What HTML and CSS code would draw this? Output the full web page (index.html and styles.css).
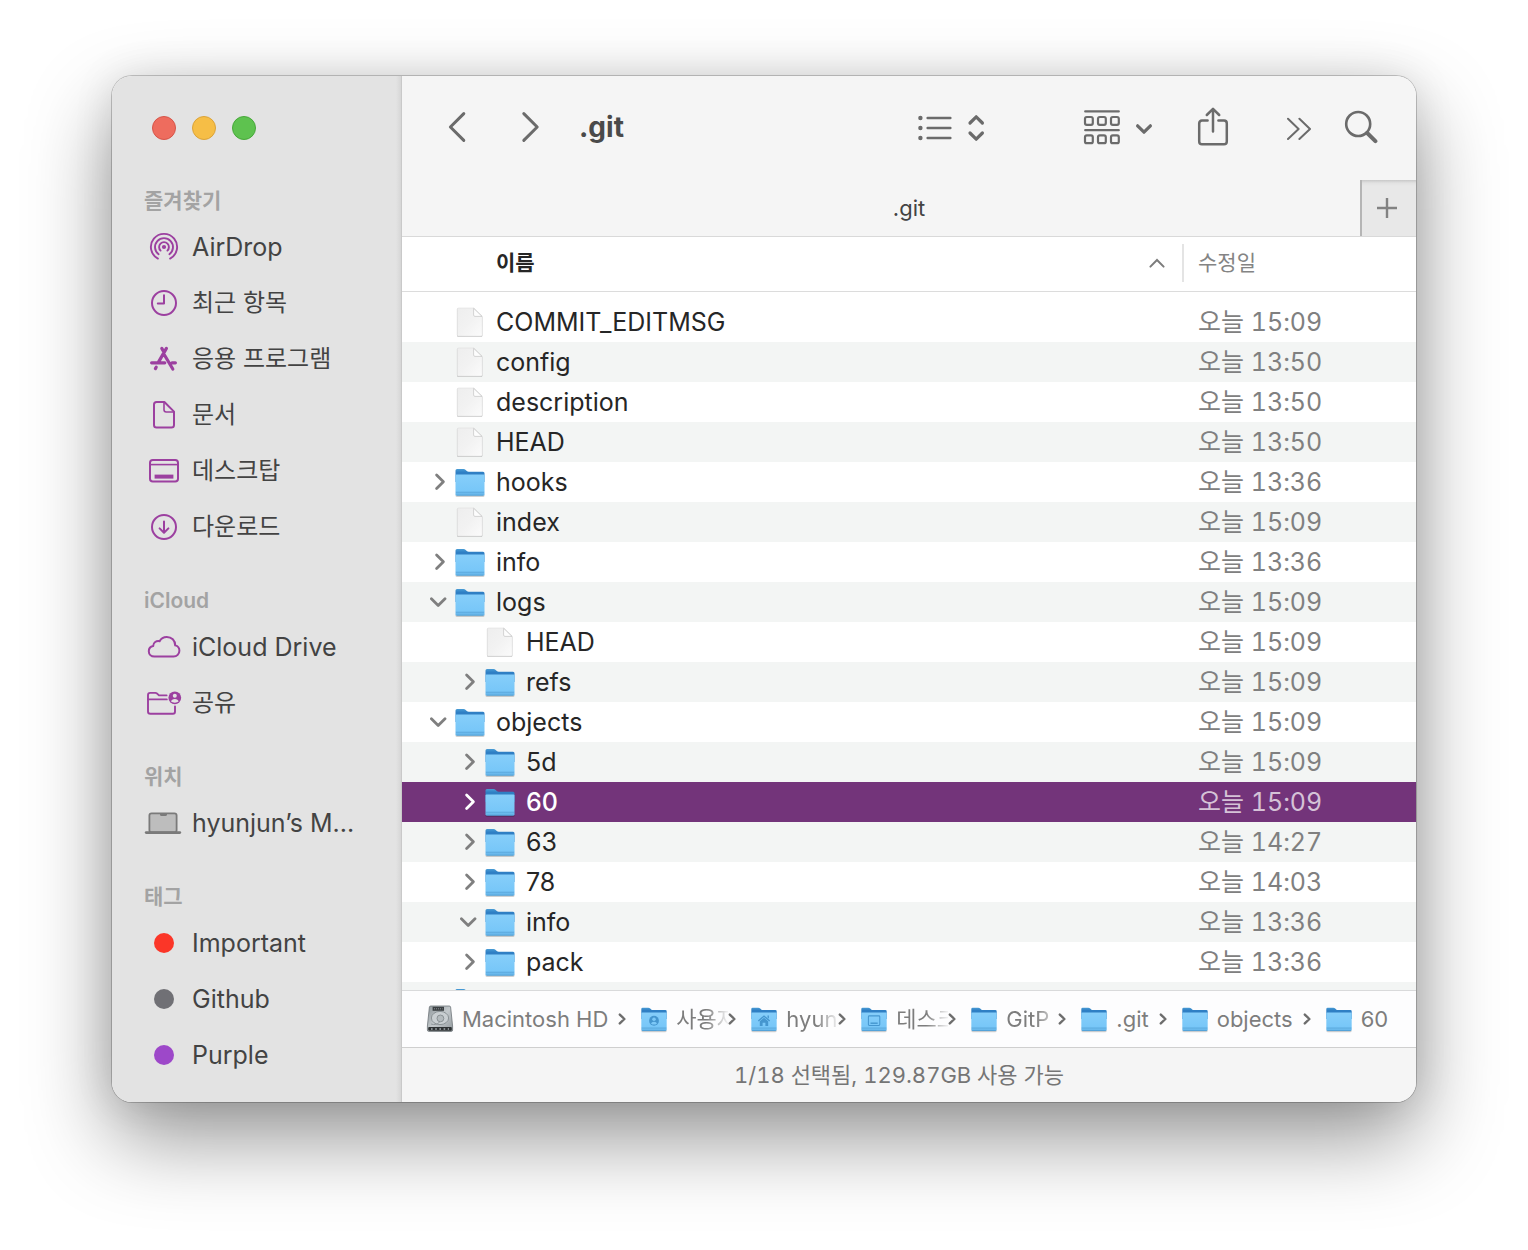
FILE: index.html
```html
<!DOCTYPE html>
<html lang="ko">
<head>
    <meta charset="UTF-8">
    <meta name="viewport" content="width=device-width, initial-scale=1.0">
    <title>.git</title>
    <link rel="stylesheet" href="styles.css">
</head>
<body>
    <!-- Shared icons -->
    <svg class="sprite" aria-hidden="true">
        <defs>
            <linearGradient id="folderBack" x1="0" y1="0" x2="0" y2="1">
                <stop offset="0" stop-color="#4a9dd6"/>
                <stop offset="0.25" stop-color="#2f7fc4"/>
                <stop offset="1" stop-color="#2f7fc4"/>
            </linearGradient>
            <linearGradient id="folderFront" x1="0" y1="0" x2="0" y2="1">
                <stop offset="0" stop-color="#86cefa"/>
                <stop offset="0.76" stop-color="#78c7f8"/>
                <stop offset="0.82" stop-color="#6cbaed"/>
                <stop offset="1" stop-color="#68b8ec"/>
            </linearGradient>
            <linearGradient id="paper" x1="0" y1="0" x2="1" y2="1">
                <stop offset="0" stop-color="#eeeeee"/>
                <stop offset="0.5" stop-color="#f2f2f2"/>
                <stop offset="1" stop-color="#fbfbfb"/>
            </linearGradient>
            <linearGradient id="metal" x1="0" y1="0" x2="1" y2="1">
                <stop offset="0" stop-color="#8f979b"/>
                <stop offset="0.5" stop-color="#c3c9cc"/>
                <stop offset="1" stop-color="#92999d"/>
            </linearGradient>
        </defs>
        <symbol id="folder" viewBox="0 0 32 32">
            <rect x="1.5" y="28" width="29" height="3" rx="1.5" fill="#000" opacity="0.18"/>
            <path d="M1.5 4.5Q1.5 3 3 3H9.5Q10.8 3 11.7 3.9L12.8 5Q13.5 5.7 14.8 5.7H29Q30.5 5.7 30.5 7.2V16H1.5Z" fill="url(#folderBack)"/>
            <path d="M1.5 9.6Q1.5 8.6 2.5 8.6H29.5Q30.5 8.6 30.5 9.6V28.3Q30.5 29.6 29.2 29.6H2.8Q1.5 29.6 1.5 28.3Z" fill="url(#folderFront)"/>
            <path d="M2 26.5H30" stroke="#55a3d8" stroke-width="0.5"/>
            <path d="M2.5 29.2H29.5" stroke="#4a99cf" stroke-width="0.8"/>
        </symbol>
        <symbol id="file" viewBox="0 0 32 32">
            <path d="M4.5 2.6H20L28.4 11V29.5Q28.4 31 27 31H4.5Q3 31 3 29.5V4Q3 2.6 4.5 2.6Z" fill="#000" opacity="0.22"/>
            <path d="M4.5 2H20L28.3 10.2V28.8Q28.3 30.2 27 30.2H4.5Q3.2 30.2 3.2 28.8V3.4Q3.2 2 4.5 2Z" fill="url(#paper)" stroke="#d9d9d9" stroke-width="0.5"/>
            <path d="M19.6 2.3V9Q19.6 10.4 21 10.4H28Z" fill="#fdfdfd" stroke="#c4c4c4" stroke-width="0.7"/>
        </symbol>
        <symbol id="right" viewBox="0 0 20 20">
            <path d="M6.6 3L13.4 9.8L6.6 16.6" fill="none" stroke="currentColor" stroke-width="2.8" stroke-linecap="round" stroke-linejoin="round"/>
        </symbol>
        <symbol id="down" viewBox="0 0 20 20">
            <path d="M1.4 6.8L8.2 13.6L15 6.8" fill="none" stroke="currentColor" stroke-width="2.8" stroke-linecap="round" stroke-linejoin="round"/>
        </symbol>
        <symbol id="small-right" viewBox="0 0 8 12">
            <path d="M1.8 1.6L6.4 6L1.8 10.4" fill="none" stroke="currentColor" stroke-width="2.4" stroke-linecap="round" stroke-linejoin="round"/>
        </symbol>
    </svg>

    <div class="window">
        <aside class="sidebar">
            <div class="lights">
                <button class="light close" aria-label="닫기"></button>
                <button class="light minimize" aria-label="최소화"></button>
                <button class="light zoom" aria-label="확대"></button>
            </div>

            <h2>즐겨찾기</h2>
            <ul>
                <li><a href="#">
                    <svg viewBox="0 0 40 32" fill="none" stroke="currentColor" stroke-width="1.9" stroke-linecap="round">
                        <circle cx="20" cy="16" r="2.1" fill="currentColor" stroke="none"/>
                        <path d="M16.6 19.6A4.9 4.9 0 1 1 23.4 19.6"/>
                        <path d="M14.6 23.3A9 9 0 1 1 25.4 23.3"/>
                        <path d="M13.9 27.6A13.1 13.1 0 1 1 26.1 27.6"/>
                    </svg>
                    AirDrop</a></li>
                <li><a href="#" class="ko">
                    <svg viewBox="0 0 40 32" fill="none" stroke="currentColor" stroke-width="2" stroke-linecap="round" stroke-linejoin="round">
                        <circle cx="20" cy="16" r="12"/>
                        <path d="M20 8.3V16.6H13.8"/>
                    </svg>
                    최근 항목</a></li>
                <li><a href="#" class="ko">
                    <svg viewBox="0 0 40 32" fill="none" stroke="currentColor" stroke-width="3.2" stroke-linecap="round">
                        <path d="M17.8 5.4L20 9.2M22.4 5.4L14.2 19.6M7.6 19.8H20.8M28 19.8H31.4M12.2 24.2L11.4 25.6M20.6 12.2L28.8 26"/>
                    </svg>
                    응용 프로그램</a></li>
                <li><a href="#" class="ko">
                    <svg viewBox="0 0 40 32" fill="none" stroke="currentColor" stroke-width="2" stroke-linejoin="round">
                        <path d="M12.6 3H20.4L30 12.6V26Q30 28.6 27.4 28.6H12.6Q10 28.6 10 26V5.6Q10 3 12.6 3Z"/>
                        <path d="M20 3.5V10.8Q20 13 22.2 13H29.5" stroke-width="1.6"/>
                    </svg>
                    문서</a></li>
                <li><a href="#" class="ko">
                    <svg viewBox="0 0 40 32" fill="none" stroke="currentColor" stroke-width="2">
                        <rect x="6" y="5" width="28" height="21.6" rx="2.8"/>
                        <path d="M6 9.6H34" stroke-width="1.6"/>
                        <path d="M10.6 21.6H29.4" stroke-width="4"/>
                    </svg>
                    데스크탑</a></li>
                <li><a href="#" class="ko">
                    <svg viewBox="0 0 40 32" fill="none" stroke="currentColor" stroke-width="2" stroke-linecap="round" stroke-linejoin="round">
                        <circle cx="20" cy="16" r="12"/>
                        <path d="M20 10.4V21.6M15.6 17.4L20 21.8L24.4 17.4"/>
                    </svg>
                    다운로드</a></li>
            </ul>

            <h2>iCloud</h2>
            <ul>
                <li><a href="#">
                    <svg viewBox="0 0 40 32" fill="none" stroke="currentColor" stroke-width="2" stroke-linejoin="round">
                        <path d="M10.5 25.6C7 25.6 4.8 23.2 4.8 20.2C4.8 17.6 6.6 15.5 9.2 15C9.2 11.6 12.4 9.4 15.6 10.2C17 7.4 19.8 5.9 22.8 5.9C27.6 5.9 31.2 9.5 31.2 14.4C33.8 15 35.4 17.2 35.4 19.8C35.4 23 32.8 25.6 29.6 25.6Z"/>
                    </svg>
                    iCloud Drive</a></li>
                <li><a href="#" class="ko">
                    <svg viewBox="0 0 40 32" fill="none" stroke="currentColor" stroke-width="1.9" stroke-linecap="round" stroke-linejoin="round">
                        <path d="M22.6 8.4H15L12.9 6.4Q12.3 5.9 11.4 5.9H6.2Q4 5.9 4 8.1V24.4Q4 26.7 6.3 26.7H29Q31 26.7 31 24.4V19.4"/>
                        <path d="M4 12.4H22.8"/>
                        <circle cx="30.8" cy="10.8" r="6.4" fill="currentColor" stroke="none"/>
                        <circle cx="30.8" cy="8.8" r="2" fill="#e3e3e3" stroke="none"/>
                        <path d="M27 14.6Q27.6 11.9 30.8 11.9T34.6 14.6Q33.2 15.7 30.8 15.7T27 14.6Z" fill="#e3e3e3" stroke="none"/>
                    </svg>
                    공유</a></li>
            </ul>

            <h2>위치</h2>
            <ul>
                <li><a href="#">
                    <svg class="mac" viewBox="0 0 40 32" fill="none" stroke="currentColor" stroke-width="1.8">
                        <rect x="5.4" y="6.4" width="27.2" height="19" rx="2.2" fill="#bdbdbd"/>
                        <path d="M16 7H23V7.4Q23 9 21.4 9H17.6Q16 9 16 7.4Z" fill="currentColor" stroke="none"/>
                        <path d="M2.2 25.6H35.8" stroke-width="2.8" stroke-linecap="round"/>
                    </svg>
                    hyunjun’s M...</a></li>
            </ul>

            <h2>태그</h2>
            <ul>
                <li><a href="#"><span class="tag red"></span>Important</a></li>
                <li><a href="#"><span class="tag gray"></span>Github</a></li>
                <li><a href="#"><span class="tag purple"></span>Purple</a></li>
            </ul>
        </aside>

        <main>
            <header class="toolbar">
                <button class="nav" aria-label="뒤로">
                    <svg width="20" height="32" viewBox="0 0 20 32"><path d="M15.8 2.6L2.4 16L15.8 29.4" /></svg>
                </button>
                <button class="nav" aria-label="앞으로">
                    <svg width="20" height="32" viewBox="0 0 20 32"><path d="M2.8 2.6L16.2 16L2.8 29.4" /></svg>
                </button>
                <h1>.git</h1>

                <button class="tool view" aria-label="보기">
                    <svg width="68" height="32" viewBox="0 0 68 32">
                        <g fill="currentColor" stroke="none">
                            <circle cx="2.4" cy="7" r="2.2"/>
                            <circle cx="2.4" cy="17" r="2.2"/>
                            <circle cx="2.4" cy="27" r="2.2"/>
                        </g>
                        <path d="M9.6 7H32.4M9.6 17H32.4M9.6 27H32.4" stroke-width="2.4"/>
                        <path d="M52 12L58.2 5.8L64.4 12M52 22L58.2 28.2L64.4 22" stroke-width="3.2"/>
                    </svg>
                </button>
                <button class="tool group" aria-label="그룹">
                    <svg width="70" height="36" viewBox="0 0 70 36" stroke-width="2.2">
                        <path d="M2.2 2.4H35.8M2.2 21.2H35.8"/>
                        <rect x="2" y="8" width="7.8" height="7.8" rx="1.8"/>
                        <rect x="15" y="8" width="7.8" height="7.8" rx="1.8"/>
                        <rect x="28" y="8" width="7.8" height="7.8" rx="1.8"/>
                        <rect x="2" y="26.4" width="7.8" height="7.8" rx="1.8"/>
                        <rect x="15" y="26.4" width="7.8" height="7.8" rx="1.8"/>
                        <rect x="28" y="26.4" width="7.8" height="7.8" rx="1.8"/>
                        <path d="M54.6 16.8L61 23.2L67.4 16.8" stroke-width="3.2"/>
                    </svg>
                </button>
                <button class="tool share" aria-label="공유">
                    <svg width="32" height="40" viewBox="0 0 32 40" stroke-width="2.5">
                        <path d="M10.6 13.6H5Q2.2 13.6 2.2 16.4V34.4Q2.2 37.2 5 37.2H27Q29.8 37.2 29.8 34.4V16.4Q29.8 13.6 27 13.6H21.4"/>
                        <path d="M16 24.6V2.4M9.8 8L16 1.8L22.2 8"/>
                    </svg>
                </button>
                <button class="tool" aria-label="더 보기">
                    <svg width="26" height="26" viewBox="0 0 26 26" stroke-width="2">
                        <path d="M2 4.8L12.6 15L2 25M13.4 4.8L24 15L13.4 25"/>
                    </svg>
                </button>
                <button class="tool" aria-label="검색">
                    <svg width="34" height="34" viewBox="0 0 34 34" stroke-width="2.6">
                        <circle cx="14.2" cy="14" r="12"/>
                        <path d="M23.2 23L31.4 31.2" stroke-width="4"/>
                    </svg>
                </button>
            </header>

            <div class="tabs">
                <a href="#" class="tab">.git</a>
                <button class="add" aria-label="새로운 탭">
                    <svg width="22" height="22" viewBox="0 0 22 22"><path d="M11 1V21M1 11H21"/></svg>
                </button>
            </div>

            <div class="list">
                <table>
                    <thead>
                        <tr>
                            <th class="name">
                                <button>이름
                                    <svg width="18" height="12" viewBox="0 0 18 12"><path d="M2.4 9.6L9 3L15.6 9.6"/></svg>
                                </button>
                            </th>
                            <th class="date"><button>수정일</button></th>
                        </tr>
                    </thead>
                    <tbody>
                        <tr>
                            <td><div class="entry"><span class="toggle"></span><svg class="icon"><use href="#file"/></svg>COMMIT_EDITMSG</div></td>
                            <td class="date">오늘 15:09</td>
                        </tr>
                        <tr>
                            <td><div class="entry"><span class="toggle"></span><svg class="icon"><use href="#file"/></svg>config</div></td>
                            <td class="date">오늘 13:50</td>
                        </tr>
                        <tr>
                            <td><div class="entry"><span class="toggle"></span><svg class="icon"><use href="#file"/></svg>description</div></td>
                            <td class="date">오늘 13:50</td>
                        </tr>
                        <tr>
                            <td><div class="entry"><span class="toggle"></span><svg class="icon"><use href="#file"/></svg>HEAD</div></td>
                            <td class="date">오늘 13:50</td>
                        </tr>
                        <tr>
                            <td><div class="entry"><button class="toggle" aria-label="펼치기"><svg><use href="#right"/></svg></button><svg class="icon"><use href="#folder"/></svg>hooks</div></td>
                            <td class="date">오늘 13:36</td>
                        </tr>
                        <tr>
                            <td><div class="entry"><span class="toggle"></span><svg class="icon"><use href="#file"/></svg>index</div></td>
                            <td class="date">오늘 15:09</td>
                        </tr>
                        <tr>
                            <td><div class="entry"><button class="toggle" aria-label="펼치기"><svg><use href="#right"/></svg></button><svg class="icon"><use href="#folder"/></svg>info</div></td>
                            <td class="date">오늘 13:36</td>
                        </tr>
                        <tr>
                            <td><div class="entry"><button class="toggle" aria-label="접기"><svg><use href="#down"/></svg></button><svg class="icon"><use href="#folder"/></svg>logs</div></td>
                            <td class="date">오늘 15:09</td>
                        </tr>
                        <tr>
                            <td><div class="entry nested"><span class="toggle"></span><svg class="icon"><use href="#file"/></svg>HEAD</div></td>
                            <td class="date">오늘 15:09</td>
                        </tr>
                        <tr>
                            <td><div class="entry nested"><button class="toggle" aria-label="펼치기"><svg><use href="#right"/></svg></button><svg class="icon"><use href="#folder"/></svg>refs</div></td>
                            <td class="date">오늘 15:09</td>
                        </tr>
                        <tr>
                            <td><div class="entry"><button class="toggle" aria-label="접기"><svg><use href="#down"/></svg></button><svg class="icon"><use href="#folder"/></svg>objects</div></td>
                            <td class="date">오늘 15:09</td>
                        </tr>
                        <tr>
                            <td><div class="entry nested"><button class="toggle" aria-label="펼치기"><svg><use href="#right"/></svg></button><svg class="icon"><use href="#folder"/></svg>5d</div></td>
                            <td class="date">오늘 15:09</td>
                        </tr>
                        <tr class="selected">
                            <td><div class="entry nested"><button class="toggle" aria-label="펼치기"><svg><use href="#right"/></svg></button><svg class="icon"><use href="#folder"/></svg>60</div></td>
                            <td class="date">오늘 15:09</td>
                        </tr>
                        <tr>
                            <td><div class="entry nested"><button class="toggle" aria-label="펼치기"><svg><use href="#right"/></svg></button><svg class="icon"><use href="#folder"/></svg>63</div></td>
                            <td class="date">오늘 14:27</td>
                        </tr>
                        <tr>
                            <td><div class="entry nested"><button class="toggle" aria-label="펼치기"><svg><use href="#right"/></svg></button><svg class="icon"><use href="#folder"/></svg>78</div></td>
                            <td class="date">오늘 14:03</td>
                        </tr>
                        <tr>
                            <td><div class="entry nested"><button class="toggle" aria-label="접기"><svg><use href="#down"/></svg></button><svg class="icon"><use href="#folder"/></svg>info</div></td>
                            <td class="date">오늘 13:36</td>
                        </tr>
                        <tr>
                            <td><div class="entry nested"><button class="toggle" aria-label="펼치기"><svg><use href="#right"/></svg></button><svg class="icon"><use href="#folder"/></svg>pack</div></td>
                            <td class="date">오늘 13:36</td>
                        </tr>
                        <tr>
                            <td><div class="entry"><span class="toggle"></span><svg class="icon"><use href="#folder"/></svg></div></td>
                            <td class="date"></td>
                        </tr>
                    </tbody>
                </table>
            </div>

            <nav class="path">
                <a href="#">
                    <svg class="icon" viewBox="0 0 28 28">
                        <path d="M3.4 2Q3.6 1 4.8 1H23.2Q24.4 1 24.6 2L26.6 21V25Q26.6 26.4 25.2 26.4H2.8Q1.4 26.4 1.4 25V21Z" fill="url(#metal)" stroke="#6d7478" stroke-width="0.8"/>
                        <rect x="6.6" y="1.8" width="11.4" height="4" fill="#3c4144"/>
                        <path d="M8 3.8H16.6" stroke="#8b9194" stroke-width="1" stroke-dasharray="1 1"/>
                        <ellipse cx="14" cy="13" rx="8.6" ry="6.6" fill="#c9cfd2" stroke="#858c90" stroke-width="0.9"/>
                        <circle cx="14.4" cy="13.4" r="3.4" fill="#b4bbbe" stroke="#858c90" stroke-width="0.9"/>
                        <path d="M5 19Q10 21 14 16.6" fill="none" stroke="#8b9296" stroke-width="0.9"/>
                        <rect x="2.2" y="22" width="23.6" height="3.8" rx="1" fill="#2f3335"/>
                        <path d="M5 24H23" stroke="#868d90" stroke-width="2" stroke-dasharray="1.6 2.6"/>
                    </svg>
                    <span>Macintosh HD</span></a>
                <svg class="arrow"><use href="#small-right"/></svg>
                <a href="#">
                    <svg class="icon" viewBox="0 0 32 32">
                        <use href="#folder"/>
                        <circle cx="16" cy="18" r="5.6" fill="#4596cf"/>
                        <circle cx="16" cy="16.2" r="2" fill="#7cc8f7"/>
                        <path d="M12.6 21.4Q13 19 16 19T19.4 21.4Q16 23.4 12.6 21.4Z" fill="#7cc8f7"/>
                    </svg>
                    <span class="clip">사용자</span></a>
                <svg class="arrow"><use href="#small-right"/></svg>
                <a href="#">
                    <svg class="icon" viewBox="0 0 32 32">
                        <use href="#folder"/>
                        <path d="M16 11.6L23 17.8L22 18.8L16 13.6L10 18.8L9 17.8Z" fill="#4596cf"/>
                        <path d="M16 14.6L20.8 18.6V24H17.6V20.4H14.4V24H11.2V18.6ZM20 12H21.6V15.6L20 14.2Z" fill="#4596cf"/>
                    </svg>
                    <span class="clip">hyun</span></a>
                <svg class="arrow"><use href="#small-right"/></svg>
                <a href="#">
                    <svg class="icon" viewBox="0 0 32 32">
                        <use href="#folder"/>
                        <rect x="9.6" y="12.4" width="13" height="11" rx="1" fill="none" stroke="#4596cf" stroke-width="1.2"/>
                        <path d="M12 20.8H20.2" stroke="#4596cf" stroke-width="1.6"/>
                    </svg>
                    <span class="clip">데스크</span></a>
                <svg class="arrow"><use href="#small-right"/></svg>
                <a href="#"><svg class="icon"><use href="#folder"/></svg><span class="clip">GitP</span></a>
                <svg class="arrow"><use href="#small-right"/></svg>
                <a href="#"><svg class="icon"><use href="#folder"/></svg><span>.git</span></a>
                <svg class="arrow"><use href="#small-right"/></svg>
                <a href="#"><svg class="icon"><use href="#folder"/></svg><span>objects</span></a>
                <svg class="arrow"><use href="#small-right"/></svg>
                <a href="#"><svg class="icon"><use href="#folder"/></svg><span>60</span></a>
            </nav>

            <footer>1/18 선택됨, 129.87GB 사용 가능</footer>
        </main>
    </div>
</body>
</html>
```

FILE: styles.css
```css
* {
    box-sizing: border-box;
}

body {
    margin: 0;
    padding: 76px 112px 148px;
    height: 100vh;
    background: #fff;
    font-family: Inter, "Noto Sans CJK KR", sans-serif;
    font-size: 25px;
    line-height: 32px;
    color: #262626;
}

button {
    padding: 0;
    border: 0;
    background: none;
    font: inherit;
    color: inherit;
}

a {
    color: inherit;
    text-decoration: none;
}

.sprite {
    position: absolute;
    width: 0;
    height: 0;
}

.window {
    display: flex;
    height: 100%;
    border-radius: 20px;
    overflow: hidden;
    background: #fff;
    box-shadow: 0 0 0 1px rgba(0, 0, 0, 0.2), 0 36px 84px rgba(0, 0, 0, 0.42), 0 0 40px rgba(0, 0, 0, 0.1);
}

/* Sidebar */
.sidebar {
    flex: none;
    width: 290px;
    padding-left: 32px;
    background: linear-gradient(to left, #d6d6d6, #e3e3e3 5px);
    border-right: 1px solid #c9c9c9;
    color: #434343;
}

.lights {
    display: flex;
    gap: 16px;
    padding: 40px 8px 15px;
}

.light {
    width: 24px;
    height: 24px;
    border-radius: 50%;
    border: 1px solid;
}

.close {
    background: #ee6c5e;
    border-color: #d65549;
}

.minimize {
    background: #f6be46;
    border-color: #dba339;
}

.zoom {
    background: #5ec24f;
    border-color: #47a83a;
}

.sidebar h2 {
    margin: 0;
    padding-top: 28px;
    font-size: 21px;
    line-height: 36px;
    font-weight: 600;
    color: #a3a3a3;
}

.sidebar ul {
    list-style: none;
    margin: 0;
    padding: 0;
}

.sidebar li a {
    display: flex;
    align-items: center;
    gap: 8px;
    height: 56px;
}

.sidebar svg {
    width: 40px;
    height: 32px;
    color: #9c40a0;
}

.sidebar .mac {
    color: #7a7a7a;
}

.ko {
    font-size: 24px;
}

.tag {
    width: 20px;
    height: 20px;
    margin: 0 10px;
    border-radius: 50%;
}

.red {
    background: #fb3628;
}

.gray {
    background: #707075;
}

.purple {
    background: #9d48c9;
}

/* Toolbar and tabs */
main {
    flex: 1;
    min-width: 0;
    display: flex;
    flex-direction: column;
    background: #f5f5f5;
}

.toolbar {
    display: flex;
    align-items: center;
    height: 104px;
    padding: 0 24px 2px 46px;
    color: #6b6b6b;
}

.toolbar svg {
    display: block;
    fill: none;
    stroke: currentColor;
    stroke-linecap: round;
    stroke-linejoin: round;
}

.nav {
    margin-right: 53px;
    stroke-width: 3;
}

.toolbar h1 {
    margin: 0 auto 0 -15px;
    font-size: 28px;
    font-weight: 700;
    color: #4a4a4a;
}

.tool {
    display: flex;
    justify-content: center;
    width: 62px;
}

.view {
    width: 80px;
    margin-right: 86px;
}

.group {
    width: 80px;
}

.share {
    width: 110px;
}

.tabs {
    display: grid;
    grid-template-columns: 56px 1fr 56px;
    height: 56px;
}

.tab {
    grid-column: 2;
    align-self: center;
    text-align: center;
    font-size: 22px;
    color: #434343;
}

.add {
    display: flex;
    align-items: center;
    justify-content: center;
    padding-right: 4px;
    border-left: 2px solid #b5b5b5;
    background: linear-gradient(#c8c8c8, #e2e2e2 3px, #e8e8e8 6px);
}

.add svg {
    fill: none;
    stroke: #828282;
    stroke-width: 2.4;
}

/* File list */
.list {
    flex: 1;
    min-height: 0;
    overflow: hidden;
    border-top: 1px solid #d9d9d9;
    background: #fff;
}

table {
    width: 100%;
    table-layout: fixed;
    border-collapse: separate;
    border-spacing: 0;
}

th {
    height: 55px;
    padding: 0 0 2px;
    border-bottom: 1px solid #dcdcdc;
    font-size: 21px;
    font-weight: 600;
    text-align: left;
}

th button {
    display: flex;
    align-items: center;
    justify-content: space-between;
    width: 100%;
    height: 38px;
}

th.name button {
    padding: 0 16px 0 94px;
}

th svg {
    fill: none;
    stroke: #7c7c7c;
    stroke-width: 2;
    stroke-linecap: round;
}

th.date {
    width: 234px;
    font-weight: 400;
    color: #848484;
}

th.date button {
    padding-left: 14px;
    border-left: 2px solid #e4e4e4;
}

tbody::before {
    content: "";
    display: block;
    height: 10px;
}

td {
    height: 40px;
    padding: 0;
    line-height: 40px;
}

td.date {
    padding-left: 16px;
    font-variant-numeric: tabular-nums;
    color: #808080;
}

tbody tr:nth-child(even) {
    background: #f3f5f4;
}

.entry {
    display: flex;
    align-items: center;
    height: 40px;
    padding-left: 28px;
}

.nested {
    padding-left: 58px;
}

.toggle {
    width: 20px;
    height: 20px;
    margin-right: 4px;
    color: #7f7f7f;
}

.toggle svg {
    display: block;
    width: 20px;
    height: 20px;
}

.entry .icon {
    width: 32px;
    height: 32px;
    margin-right: 10px;
}

tbody .selected {
    background: #73347a;
    color: #fff;
}

.selected .toggle {
    color: #fff;
}

.selected .entry {
    font-weight: 500;
}

.selected .date {
    color: #d5c2d7;
}

/* Path bar and status */
.path {
    display: flex;
    align-items: center;
    height: 57px;
    padding-left: 24px;
    border-top: 1px solid #d9dadb;
    background: #fdfdfe;
    font-size: 22px;
    color: #7d7d7d;
}

.path a {
    display: flex;
    align-items: center;
    gap: 8px;
}

.path .icon {
    flex: none;
    width: 28px;
    height: 28px;
}

.path span {
    padding-right: 10px;
    white-space: nowrap;
}

.path .clip {
    width: 52px;
    padding: 0;
    overflow: hidden;
    -webkit-mask-image: linear-gradient(to right, #000 30px, transparent 54px);
    mask-image: linear-gradient(to right, #000 30px, transparent 54px);
}

.arrow {
    flex: none;
    width: 8px;
    height: 12px;
    margin-right: 14px;
    color: #6d6d6d;
}

footer {
    height: 55px;
    padding-right: 20px;
    border-top: 1px solid #cfcfcf;
    line-height: 54px;
    text-align: center;
    font-size: 22px;
    font-variant-numeric: tabular-nums;
    color: #757575;
}
```
